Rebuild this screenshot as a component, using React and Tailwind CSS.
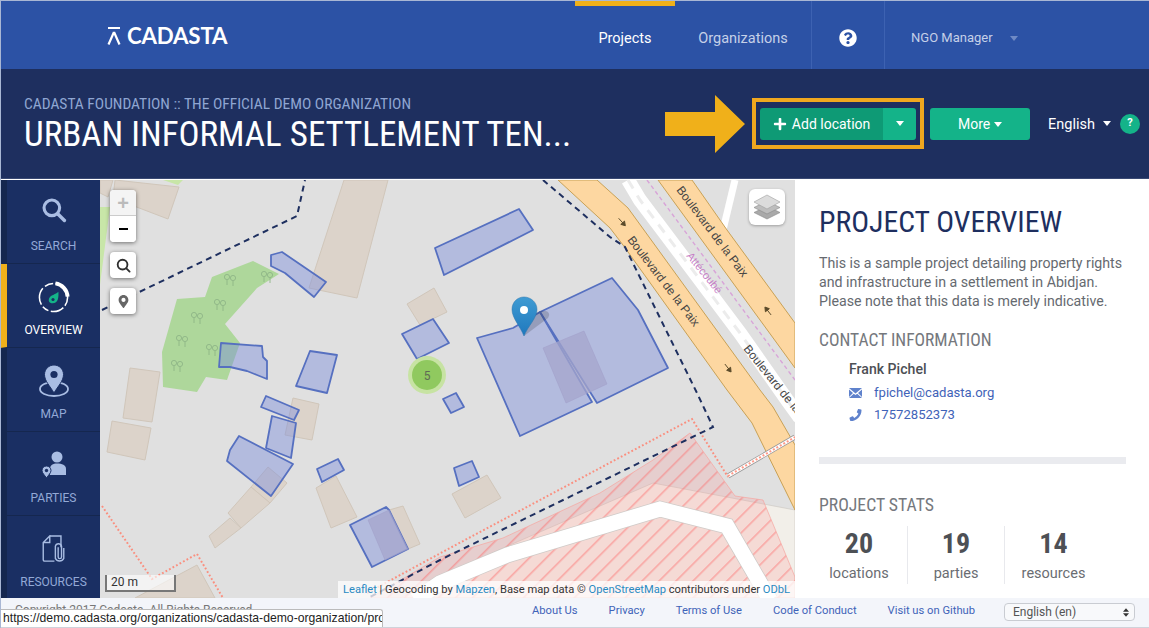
import React from "react";
import { FaPlus, FaQuestionCircle, FaPhoneAlt, FaMapMarkerAlt } from "react-icons/fa";

const roboto = "font-['Roboto',sans-serif]";
const cond = "font-['Roboto',sans-serif] [font-stretch:75%]";

const beige = [
  "100,180 113,180 108,197 100,193",
  "115,180 179,187 168,219 113,198",
  "344,180 388,180 357,298 309,288",
  "434,288 447,312 420,325 407,304",
  "130,368 160,372 152,422 123,418",
  "112,421 151,428 145,460 107,452",
  "293,398 319,404 312,440 285,435",
  "268,467 287,483 270,503 251,487",
  "251,487 270,503 241,528 228,513",
  "230,518 241,528 215,548 209,536",
  "336,476 357,517 331,528 316,488",
  "403,506 420,544 408,549 389,510",
  "487,475 501,498 465,518 452,494",
  "197,565 215,598 135,598",
];

const blue = [
  "271,255 282,252 326,282 314,297 285,273 271,266",
  "221,343 262,346 263,357 267,361 267,379 257,375 247,371 230,367 219,367",
  "310,351 337,355 327,393 296,386",
  "402,334 433,319 449,343 417,359",
  "519,209 533,230 444,275 435,248",
  "477,338 513,328 540,312 592,402 520,436",
  "540,312 612,278 638,310 668,368 597,403",
  "266,396 299,410 294,420 261,407",
  "272,416 296,423 291,458 266,448",
  "239,436 293,464 271,496 227,461 230,450",
  "317,469 338,459 344,470 322,482",
  "350,525 386,507 389,510 408,549 372,567",
  "443,399 456,393 464,407 451,413",
  "454,468 472,461 479,477 459,486",
];

const overlaps = [
  "543,348 584,331 607,384 566,403",
  "368,520 389,510 408,549 385,560",
];

const trees = [
  [230, 280], [267, 277], [220, 305], [197, 318], [182, 341], [212, 350], [177, 366],
];

function Caret({ className }) {
  return (
    <svg viewBox="0 0 10 6" className={className}>
      <path d="M0 0h10L5 6z" fill="currentColor" />
    </svg>
  );
}

function RoadLabel({ x, y, angle, size = 12, fill = "#444", children }) {
  return (
    <text
      transform={`translate(${x} ${y}) rotate(${angle})`}
      fontFamily="Liberation Sans, sans-serif"
      fontSize={size}
      fill={fill}
    >
      {children}
    </text>
  );
}

function RoadArrow({ x, y, angle }) {
  return (
    <g transform={`translate(${x} ${y}) rotate(${angle})`}>
      <path d="M-5 0H3M1 -2.5L5 0L1 2.5z" fill="#5a4a2a" stroke="#5a4a2a" strokeWidth="0.9" />
    </g>
  );
}

function MapDrawing() {
  return (
    <svg viewBox="100 180 695 418" className="block h-[418px] w-[695px]">
      <defs>
        <pattern id="hatch" width="12" height="12" patternUnits="userSpaceOnUse" patternTransform="rotate(-45)">
          <rect width="12" height="12" fill="#f88" fillOpacity="0.2" />
          <rect width="12" height="1.6" fill="#f66" fillOpacity="0.45" />
        </pattern>
        <linearGradient id="pin" x1="0" y1="0" x2="0" y2="1">
          <stop offset="0" stopColor="#3f9bd3" />
          <stop offset="1" stopColor="#1f78bd" />
        </linearGradient>
      </defs>
      <rect x="100" y="180" width="695" height="418" fill="#e0e0e0" />

      {/* land at the bottom */}
      <polygon points="653,483 795,510 795,598 400,598 503,548" fill="#f2efe9" stroke="#cfcac4" strokeWidth="0.7" />

      {/* park */}
      <polygon points="100,207 110,207 100,285" fill="#c8e6a8" />
      <polygon points="163,180 183,180 178,185" fill="#c8e6a8" />
      <polygon
        points="253,261 279,274 257,288 225,324 240,343 227,380 206,377 197,392 163,387 162,352 177,299 205,297 212,277"
        fill="#aed79b"
      />
      {trees.map(([x, y], i) => (
        <g key={i} fill="none" stroke="#8fb587" strokeWidth="0.9">
          <circle cx={x - 3} cy={y - 3} r="2.6" />
          <path d={`M${x - 3} ${y}v5`} />
          <circle cx={x + 3} cy={y - 2} r="2.6" />
          <path d={`M${x + 3} ${y + 1}v5`} />
        </g>
      ))}

      {/* roads */}
      <polyline points="628,180 640,200 740,333 787,400 800,418" fill="none" stroke="#fff" strokeWidth="14" />
      <polyline points="628,180 640,200 740,333 787,400 800,418" fill="none" stroke="#ececec" strokeWidth="3" strokeDasharray="10 8" />
      <polyline points="735,180 723,230" fill="none" stroke="#fff" strokeWidth="7" />
      <polygon points="658,180 692,180 727,230 795,323 795,368" fill="#fdd7a1" stroke="#c8a156" strokeWidth="1" />
      <polygon points="558,180 597,180 628,208 760,390 773,407 795,445 795,510 752,423 727,390 623,245 610,228" fill="#fdd7a1" stroke="#c8a156" strokeWidth="1" />
      <line x1="647" y1="180" x2="795" y2="380" stroke="#d8a4d8" strokeWidth="1.4" strokeDasharray="4 3" />
      <line x1="728" y1="476" x2="795" y2="437" stroke="#999" strokeWidth="5" />
      <line x1="728" y1="476" x2="795" y2="437" stroke="#fff" strokeWidth="3.4" />
      <line x1="728" y1="476" x2="795" y2="437" stroke="#f98" strokeWidth="2" strokeDasharray="2 2" />

      <RoadLabel x={676} y={190} angle={53}>Boulevard de la Paix</RoadLabel>
      <RoadLabel x={627} y={240} angle={52.5}>Boulevard de la Paix</RoadLabel>
      <RoadLabel x={743} y={349} angle={51}>Boulevard de la Paix</RoadLabel>
      <RoadLabel x={686} y={256} angle={51} size={11} fill="#c77fc7">Attécoubé</RoadLabel>
      <RoadArrow x={622} y={222} angle={48} />
      <RoadArrow x={768} y={311} angle={232} />
      <RoadArrow x={728} y={368} angle={52} />

      {/* buildings */}
      {beige.map((p) => (
        <polygon key={p} points={p} fill="#dcd3ca" stroke="#d0c6ba" strokeWidth="1" />
      ))}

      {/* hatched zone, the road stays white on top of it */}
      <polygon
        points="370,598 440,557 503,538 600,493 653,460 690,433 735,496 763,500 795,577 795,598"
        fill="url(#hatch)"
        stroke="#f7a5a0"
        strokeWidth="1"
        strokeOpacity="0.7"
      />
      <polyline points="415,600 440,583 507,555 660,509 727,526 770,600" fill="none" stroke="#cfcbc8" strokeWidth="16.5" />
      <polyline points="415,600 440,583 507,555 660,509 727,526 770,600" fill="none" stroke="#fff" strokeWidth="15" />

      <polyline points="102,506 152,579 197,554 223,598" fill="none" stroke="#fa8f7f" strokeWidth="2" strokeDasharray="1.8 2.2" />
      <polyline points="367,593 450,548 692,419 728,477" fill="none" stroke="#fa8f7f" strokeWidth="2" strokeDasharray="1.8 2.2" />
      <polyline points="102,310 297,216 305,180" fill="none" stroke="#1e2f5f" strokeWidth="2" strokeDasharray="6 4.5" />
      <polyline
        points="543,180 610,237 625,247 697,393 713,427 440,560 370,597"
        fill="none"
        stroke="#1e2f5f"
        strokeWidth="2"
        strokeDasharray="6 4.5"
      />

      {/* project locations */}
      {blue.map((p) => (
        <polygon key={p} points={p} fill="#7c8fdc" fillOpacity="0.45" stroke="#5670c0" strokeWidth="1.8" strokeLinejoin="round" />
      ))}
      {overlaps.map((p) => (
        <polygon key={p} points={p} fill="#a5a5cc" fillOpacity="0.75" stroke="#a09fc8" strokeWidth="0.5" />
      ))}

      {/* cluster */}
      <circle cx="427" cy="375" r="19" fill="#c7e3a3" />
      <circle cx="427" cy="375" r="15" fill="#90c95f" />
      <text x="427" y="379.5" textAnchor="middle" fontFamily="Roboto, sans-serif" fontSize="12" fill="#5f6b55">5</text>

      {/* marker */}
      <path d="M524 336L548 318C552 312 545 309 538 312L531 316z" fill="#000" fillOpacity="0.16" />
      <path d="M524 336C520 326 512 318 512 309.5C512 302 517.5 297 524 297C530.5 297 537 302 537 309.5C537 318 528 326 524 336z" fill="url(#pin)" stroke="#2a74ad" strokeWidth="0.5" />
      <circle cx="524" cy="310" r="4" fill="#fff" />
    </svg>
  );
}

function MapButton({ children }) {
  return (
    <div className="flex h-[26px] w-[26px] items-center justify-center rounded bg-white text-[#333] shadow-[0_1px_4px_rgba(0,0,0,0.5)]">
      {children}
    </div>
  );
}

function MapPanel() {
  return (
    <div className="relative h-[418px] w-[695px] shrink-0 overflow-hidden">
      <MapDrawing />
      <div className="absolute top-[10px] left-[10px] flex flex-col gap-[10px]">
        <div className="flex flex-col overflow-hidden rounded bg-white shadow-[0_1px_4px_rgba(0,0,0,0.5)]">
          <div className="flex h-[26px] w-[26px] items-center justify-center border-b border-[#ccc] bg-[#f4f4f4] font-['Liberation_Sans',sans-serif] text-[20px] font-bold text-[#bbb]">+</div>
          <div className="flex h-[26px] w-[26px] items-center justify-center bg-white">
            <span className="block h-[2px] w-[9px] bg-black" />
          </div>
        </div>
        <MapButton>
          <svg viewBox="0 0 16 16" className="h-[15px] w-[15px]" fill="none" stroke="#2f2f2f">
            <circle cx="7" cy="7" r="5.2" strokeWidth="2" />
            <path d="M11 11L14.5 14.5" strokeWidth="2" strokeLinecap="round" />
          </svg>
        </MapButton>
        <MapButton><FaMapMarkerAlt className="h-[13px] w-[13px] text-[#666]" /></MapButton>
      </div>
      <div className="absolute top-[9px] right-[10px] flex h-[36px] w-[36px] items-center justify-center rounded-md bg-white shadow-[0_1px_3px_rgba(0,0,0,0.3)]">
        <svg viewBox="0 0 28 26" className="h-[26px] w-[28px]">
          <path d="M14 12L27 18.5L14 25L1 18.5z" fill="#a9a9a9" stroke="#8a8a8a" strokeWidth="0.6" />
          <path d="M14 7L27 13.5L14 20L1 13.5z" fill="#bdbdbd" stroke="#8a8a8a" strokeWidth="0.6" />
          <path d="M14 1L27 8L14 15L1 8z" fill="#dcdcdc" stroke="#a0a0a0" strokeWidth="0.6" />
        </svg>
      </div>
      <div className={`absolute bottom-[6px] left-[5px] h-[17px] w-[71px] border-2 border-t-0 border-[#777] bg-white/60 pl-[4px] text-[12px] leading-[15px] text-[#333] ${roboto}`}>
        20 m
      </div>
      <div className={`absolute right-0 bottom-0 h-[17px] w-[457px] bg-white/75 pl-[5px] text-[11.15px] leading-[17px] whitespace-nowrap text-[#333] ${roboto}`}>
        <span className="text-[#2a8ac2]">Leaflet</span> | Geocoding by <span className="text-[#2a8ac2]">Mapzen</span>, Base map data © <span className="text-[#2a8ac2]">OpenStreetMap</span> contributors under <span className="text-[#2a8ac2]">ODbL</span>
      </div>
    </div>
  );
}

const sideItems = [
  {
    label: "SEARCH",
    icon: (
      <svg viewBox="0 0 30 30" className="-mt-[6px] h-[26px] w-[26px]" fill="none" stroke="#a9bde3">
        <circle cx="12.5" cy="12.5" r="9" strokeWidth="3.6" />
        <path d="M19.5 19.5L27 27" strokeWidth="4" strokeLinecap="round" />
      </svg>
    ),
  },
  {
    label: "OVERVIEW",
    active: true,
    icon: (
      <svg viewBox="0 0 34 34" className="h-[33px] w-[33px]" fill="none">
        <circle cx="17" cy="17" r="14.5" stroke="#fff" strokeWidth="1.6" strokeDasharray="9 2.5 14 2.5 7 2.5 18 3" />
        <path d="M19 2.5A14.5 14.5 0 0 1 31.5 16" stroke="#fff" strokeWidth="4" />
        <path d="M22 11C22.5 16 22 23 16 23C12.5 23 11 20 13 17C15 14 19 14 22 11z" fill="#14b389" />
        <circle cx="16.5" cy="19" r="1.6" fill="#1a2f63" />
      </svg>
    ),
  },
  {
    label: "MAP",
    icon: (
      <svg viewBox="0 0 32 34" className="h-[34px] w-[32px]" fill="none">
        <ellipse cx="16" cy="25" rx="14" ry="7" stroke="#a9bde3" strokeWidth="1.8" />
        <path d="M16 29C12 22 6.5 17 6.5 10.5C6.5 5 11 1 16 1C21 1 25.5 5 25.5 10.5C25.5 17 20 22 16 29z" fill="#a9bde3" stroke="#1a2f63" strokeWidth="1" />
        <circle cx="16" cy="10.5" r="3.6" fill="#1a2f63" />
      </svg>
    ),
  },
  {
    label: "PARTIES",
    icon: (
      <svg viewBox="0 0 26 28" className="h-[28px] w-[26px]">
        <circle cx="16" cy="6" r="5.5" fill="#a9bde3" />
        <path d="M9 24V18C9 14 12 12.5 16 12.5C21 12.5 25 14 25 18V24z" fill="#a9bde3" />
        <path d="M5.5 27C3.5 24 1 22 1 19.5C1 17 3 15 5.5 15C8 15 10 17 10 19.5C10 22 7.5 24 5.5 27z" fill="#a9bde3" stroke="#1a2f63" strokeWidth="1" />
        <circle cx="5.5" cy="19.5" r="1.7" fill="#1a2f63" />
      </svg>
    ),
  },
  {
    label: "RESOURCES",
    icon: (
      <svg viewBox="0 0 24 30" className="h-[28px] w-[23px]" fill="none" stroke="#a9bde3" strokeWidth="1.5">
        <path d="M8 1H20V13M13 28H2.5A1.5 1.5 0 0 1 1 26.5V8L8 1V8H1" />
        <path d="M17 13V23.5A1.8 1.8 0 0 0 20.6 23.5V12A3.4 3.4 0 0 0 14 12V25A5 5 0 0 0 23 25V14" />
      </svg>
    ),
  },
];

function SideNav() {
  return (
    <nav className="flex h-[418px] w-[100px] shrink-0 flex-col">
      {sideItems.map((item) => (
        <div
          key={item.label}
          className={`flex h-[84px] shrink-0 flex-col items-center border-b border-l-[7px] border-b-[#15274f] bg-[#1a2f63] pt-[14px] ${item.active ? "border-l-[#f0b01a]" : "border-l-[#15274f]"}`}
        >
          <div className="flex h-[38px] items-center justify-center">{item.icon}</div>
          <span className={`mt-auto mb-[10px] text-[12px] leading-[14px] ${roboto} ${item.active ? "text-white" : "text-[#93a9d6]"}`}>
            {item.label}
          </span>
        </div>
      ))}
    </nav>
  );
}

function Stat({ value, label, border }) {
  return (
    <div className={`flex w-[97px] flex-col items-center ${border ? "border-r border-[#e8e9ed]" : ""}`}>
      <span className={`text-[28px] leading-[36px] font-bold text-[#4d5055] ${cond}`}>{value}</span>
      <span className={`mt-[2px] text-[14.5px] leading-[20px] text-[#6a6d72] ${roboto}`}>{label}</span>
    </div>
  );
}

function OverviewPanel() {
  return (
    <aside className="h-[418px] flex-1 overflow-hidden bg-white pt-[24px] pr-[23px] pl-[24px]">
      <h1 className={`text-[29.7px] leading-[36px] text-[#1e2f5f] ${cond}`}>PROJECT OVERVIEW</h1>
      <p className={`mt-[14px] w-[320px] text-[14.2px] leading-[19px] text-[#666a70] ${roboto}`}>
        This is a sample project detailing property rights and infrastructure in a settlement in Abidjan. Please note that this data is merely indicative.
      </p>
      <h2 className={`mt-[17px] text-[17.5px] leading-[24px] text-[#75787d] ${cond}`}>CONTACT INFORMATION</h2>
      <div className="mt-[7px] ml-[30px]">
        <div className={`text-[14.1px] leading-[20px] font-medium text-[#4d5055] ${roboto}`}>Frank Pichel</div>
        <div className={`mt-[4px] flex items-center gap-[12px] text-[13.1px] leading-[20px] text-[#3f63b8] ${roboto}`}>
          <svg viewBox="0 0 13 10" className="h-[10px] w-[13px]">
            <path d="M0 0H13L6.5 5.5zM0 1.5L4 5L0 9zM13 1.5L9 5L13 9zM0 10L4.8 5.8L6.5 7L8.2 5.8L13 10z" fill="#5f82cc" />
          </svg>
          fpichel@cadasta.org
        </div>
        <div className={`mt-[2px] flex items-center gap-[12px] text-[13.1px] leading-[20px] text-[#3f63b8] ${roboto}`}>
          <FaPhoneAlt className="h-[12px] w-[13px] -scale-x-100 text-[#5f82cc]" />
          17572852373
        </div>
      </div>
      <div className="mt-[32px] h-[7px] bg-[#eaebef]" />
      <h2 className={`mt-[29px] text-[17.7px] leading-[24px] text-[#75787d] ${cond}`}>PROJECT STATS</h2>
      <div className="mt-[9px] ml-[-8px] flex">
        <Stat value="20" label="locations" border />
        <Stat value="19" label="parties" border />
        <Stat value="14" label="resources" />
      </div>
    </aside>
  );
}

export default function App() {
  return (
    <div className="relative flex h-[628px] w-[1149px] flex-col overflow-hidden border-t border-[#a9b7d4] bg-white after:absolute after:inset-y-0 after:left-0 after:w-px after:bg-[#a9b7d4]">
      <header className="flex h-[68px] shrink-0 items-stretch bg-[#2c52a5]">
        <div className="mt-[2px] ml-[107px] flex items-center gap-[6px]">
          <svg viewBox="0 0 14 18" className="h-[18px] w-[14px]">
            <path d="M1 0.9H13M7 5L1.5 17.5M7 5L12.5 17.5" fill="none" stroke="#fff" strokeWidth="2.2" />
          </svg>
          <span className="font-['Lato',sans-serif] text-[22.3px] leading-none font-bold tracking-[-0.2px] text-white">CADASTA</span>
        </div>
        <nav className={`ml-auto flex items-stretch text-[14.5px] ${roboto}`}>
          <a className="flex w-[100px] items-center justify-center border-t-[5px] border-[#f0b01a] pt-[2px] text-white">Projects</a>
          <a className="flex w-[136px] items-center justify-center pt-[7px] text-[#c5d0e8]">Organizations</a>
          <div className="flex w-[74px] items-center justify-center border-x border-[#3d62b2] pt-[6px] text-white">
            <FaQuestionCircle className="h-[18px] w-[18px]" />
          </div>
          <div className="flex w-[264px] items-center pt-[6px] pl-[26px] text-[13px] text-[#c5d0e8]">
            NGO Manager
            <Caret className="ml-[17px] h-[5px] w-[8px] text-[#6f8ac5]" />
          </div>
        </nav>
      </header>

      <section className="flex h-[110px] shrink-0 items-center justify-between border-b border-[#3a4a74] bg-[#1e2f5f] pr-[9px] pl-[24px]">
        <div className="w-[560px] pt-[2px]">
          <div className={`text-[15.5px] leading-[20px] text-[#8fa6d2] ${cond}`}>CADASTA FOUNDATION :: THE OFFICIAL DEMO ORGANIZATION</div>
          <div className={`text-[35px] leading-[42px] whitespace-nowrap text-white ${cond}`}>URBAN INFORMAL SETTLEMENT TEN...</div>
        </div>
        <div className={`flex items-center ${roboto}`}>
          <svg viewBox="0 0 80 58" className="h-[58px] w-[80px]">
            <path d="M0 17H50V0L80 29L50 58V41H0z" fill="#f0b01a" />
          </svg>
          <div className="ml-[7px] flex h-[51px] w-[172px] items-center justify-center border-4 border-[#f0a81f]">
            <div className="flex h-[32px] w-[156px] overflow-hidden rounded-[3px] text-[14px] text-white">
              <div className="flex w-[123px] items-center justify-center gap-[5px] bg-[#0e9a75] pt-[1px]">
                <FaPlus className="h-[14px] w-[14px]" />
                Add location
              </div>
              <div className="flex flex-1 items-center justify-center bg-[#14b389]">
                <Caret className="h-[5px] w-[8px]" />
              </div>
            </div>
          </div>
          <div className="ml-[6px] flex h-[32px] w-[100px] items-center justify-center gap-[4px] rounded-[3px] bg-[#14b389] pt-[1px] text-[14px] text-white">
            More
            <Caret className="h-[5px] w-[8px]" />
          </div>
          <span className="ml-[18px] pt-[3px] text-[14.5px] text-white">English</span>
          <Caret className="ml-[8px] h-[5px] w-[8px] text-white" />
          <div className="ml-[9px] flex h-[20px] w-[20px] items-center justify-center rounded-full bg-[#14b389] text-[11px] font-bold text-white">?</div>
        </div>
      </section>

      <main className="flex h-[419px] shrink-0 pt-px">
        <SideNav />
        <MapPanel />
        <OverviewPanel />
      </main>

      <footer className={`relative flex h-[30px] shrink-0 items-start border-b border-[#cfd2da] bg-[#f3f5fa] text-[11.2px] ${roboto}`}>
        <span className="mt-[3px] ml-[15px] text-[12px] leading-[18px] text-[#777]">Copyright 2017 Cadasta. All Rights Reserved</span>
        <div className="mt-[5px] ml-auto flex gap-[31px] text-[#3f63b8]">
          <a>About Us</a>
          <a>Privacy</a>
          <a>Terms of Use</a>
          <a>Code of Conduct</a>
          <a>Visit us on Github</a>
        </div>
        <div className="mt-[5px] mr-[14px] ml-[29px] flex h-[18px] w-[131px] items-center justify-between rounded-[4px] border border-[#c9ccd2] bg-[#f8f9fb] pr-[5px] pl-[8px] text-[12px] text-[#555]">
          English (en)
          <span className="flex flex-col gap-[1px]">
            <Caret className="h-[4px] w-[6px] rotate-180 text-[#333]" />
            <Caret className="h-[4px] w-[6px] text-[#333]" />
          </span>
        </div>
        <div className="absolute bottom-0 left-0 h-[18px] w-[383px] overflow-hidden rounded-tr-[3px] border-t border-r border-[#bbb] bg-white pl-[3px] font-['Liberation_Sans',sans-serif] text-[12.2px] leading-[17px] whitespace-nowrap text-[#222]">
          https://demo.cadasta.org/organizations/cadasta-demo-organization/pro
        </div>
      </footer>
    </div>
  );
}
